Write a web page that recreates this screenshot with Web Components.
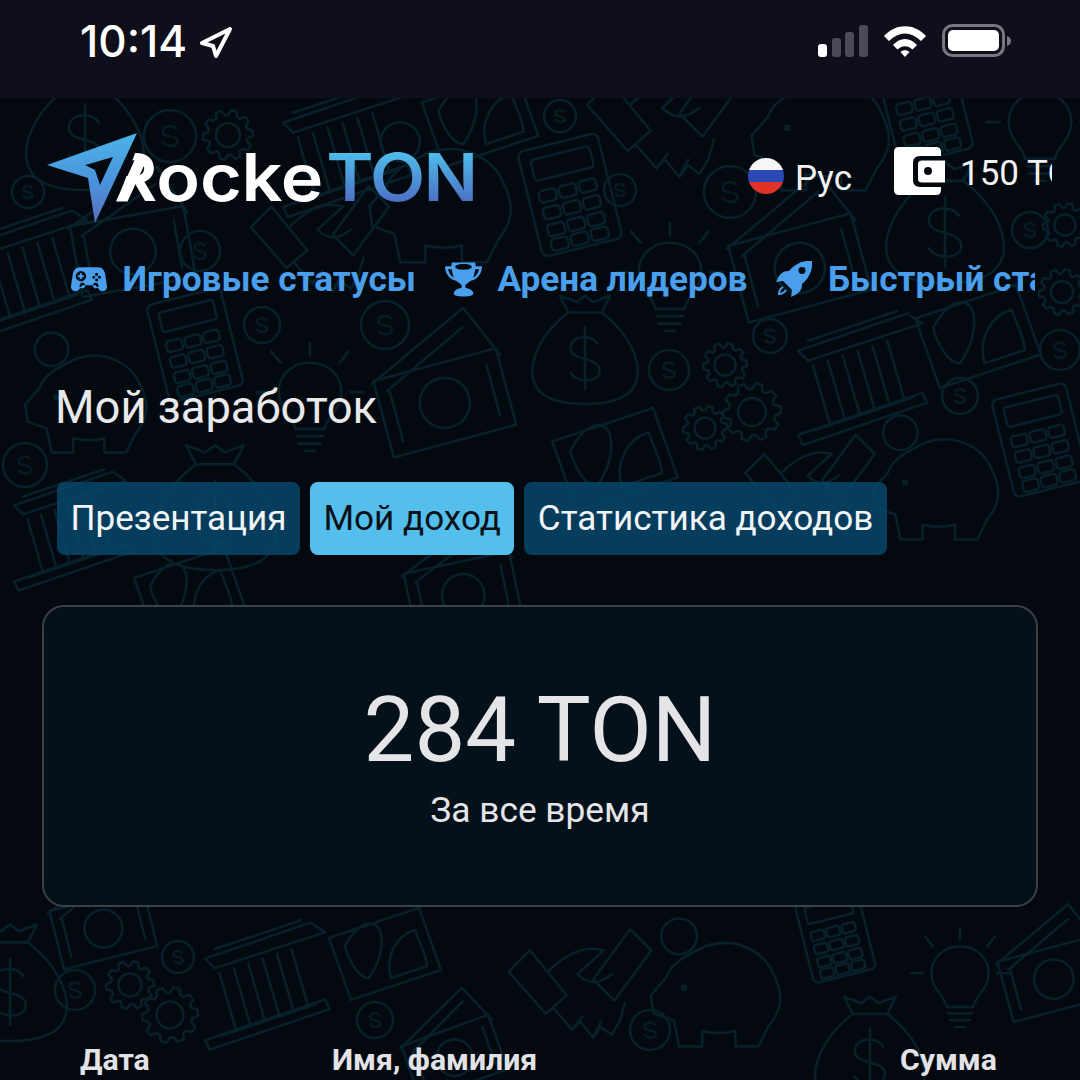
<!DOCTYPE html>
<html lang="ru">
<head>
<meta charset="utf-8">
<title>RockeTON</title>
<style>
    html, body { margin: 0; padding: 0; height: 1080px; overflow: hidden; background: #03090f; }
    body { font-family: Roboto, "Liberation Sans", sans-serif; }
</style>
</head>
<body>
<status-bar></status-bar>
<earnings-page>
    <site-header></site-header>
    <site-nav>
        <nav-item label="Игровые статусы" icon="pad"></nav-item>
        <nav-item label="Арена лидеров" icon="cup"></nav-item>
        <nav-item label="Быстрый старт" icon="rocket"></nav-item>
    </site-nav>
    <page-title>Мой заработок</page-title>
    <tab-row>
        <tab-button>Презентация</tab-button>
        <tab-button active>Мой доход</tab-button>
        <tab-button>Статистика доходов</tab-button>
    </tab-row>
    <total-card amount="284 TON" caption="За все время"></total-card>
    <table-head></table-head>
</earnings-page>

<script>
class StatusBar extends HTMLElement {
    constructor() {
        super();
        this.attachShadow({ mode: 'open' });
        this.shadowRoot.innerHTML = `
            <style>
                :host { display: flex; align-items: flex-start; height: 98px; box-sizing: border-box; padding: 19px 0 0 80px; background: #0f0f1b; color: #fff; }
                .time { font: 500 44px/44px Inter, "Liberation Sans", sans-serif; width: 117px; }
                .arrow { margin-top: 5px; }
                .right { margin-left: auto; margin-right: 68px; margin-top: 5px; display: flex; gap: 15px; align-items: center; }
            </style>
            <span class="time">10:14</span>
            <svg class="arrow" width="38" height="38" viewBox="0 0 38 38">
                <path d="M33 5 L5 19 L16 22 L19 32 Z" fill="none" stroke="#fff" stroke-width="4" stroke-linejoin="round"/>
            </svg>
            <div class="right">
                <svg width="50" height="34" viewBox="0 0 50 34">
                    <rect x="0" y="20" width="9" height="13" rx="3" fill="#fff"/>
                    <rect x="14" y="14" width="9" height="19" rx="3" fill="#4b4b57"/>
                    <rect x="27" y="8" width="9" height="25" rx="3" fill="#4b4b57"/>
                    <rect x="41" y="1" width="9" height="32" rx="3" fill="#4b4b57"/>
                </svg>
                <svg width="44" height="34" viewBox="0 0 44 34">
                    <path d="M1 12 C13 -1 31 -1 43 12 L38 17 C28 7 16 7 6 17 Z" fill="#fff"/>
                    <path d="M10 21 C17 13 27 13 34 21 L29.500 25.500 C25 21 19 21 14.500 25.500 Z" fill="#fff"/>
                    <path d="M17.500 28 C20 25.500 24 25.500 26.500 28 L22 33 Z" fill="#fff"/>
                </svg>
                <svg width="70" height="34" viewBox="0 0 70 34">
                    <rect x="1.500" y="1.500" width="60" height="30" rx="9" fill="none" stroke="#77777e" stroke-width="3"/>
                    <rect x="6" y="6" width="51" height="21" rx="5" fill="#fff"/>
                    <path d="M65 12 C68 13 69 15 69 17 C69 19 68 21 65 22 Z" fill="#77777e"/>
                </svg>
            </div>
        `;
    }
}

const coinPath = `<circle r="50"/><path d="M12 -14 C5 -22 -14 -20 -14 -8 C-14 5 14 -4 14 10 C14 21 -6 22 -13 13" opacity=".8"/>`;

function gearPath() {
    let d = '';
    const teeth = 10;
    for (let i = 0; i < teeth; i++) {
        const a = i / teeth * Math.PI * 2;
        const step = Math.PI / teeth;
        [[40, -step], [50, -step * 0.6], [50, step * 0.1], [40, step * 0.5]].forEach(([r, off], n) => {
            const x = (r * Math.cos(a + off)).toFixed(1);
            const y = (r * Math.sin(a + off)).toFixed(1);
            d += (i === 0 && n === 0 ? 'M' : 'L') + x + ' ' + y + ' ';
        });
    }
    return `<path d="${d}Z"/><circle r="24"/>`;
}

const doodles = {
    coin: coinPath,
    gear: gearPath(),
    bank: `<path d="M-50 -22 L38 -52 L50 -44 L-42 -14 Z M-42 -30 L30 -54"/><path d="M-38 -10 L-24 38 M-26 -14 L-12 34 M-14 -18 L0 30 M-2 -22 L12 26 M10 -26 L24 22 M22 -30 L36 18"/><path d="M-36 42 L42 16 M-46 54 L54 20 L50 12 L-50 46 Z"/>`,
    calc: `<rect x="-38" y="-50" width="76" height="100" rx="6"/><rect x="-28" y="-40" width="56" height="20" rx="3"/>` +
        [-10, 6, 22, 36].map(y => [-28, -9, 10].map(x => `<rect x="${x}" y="${y}" width="16" height="11" rx="3"/>`).join('')).join(''),
    bulb: `<path d="M-16 26 C-18 12 -34 6 -34 -14 C-34 -34 -18 -46 0 -46 C18 -46 34 -34 34 -14 C34 6 18 12 16 26 Z"/><path d="M-14 34 H14 M-12 42 H12 M-6 50 H6"/><path d="M0 -54 V-68 M-32 -46 L-42 -58 M32 -46 L42 -58 M-44 -14 H-58 M44 -14 H58"/>`,
    bag: `<path d="M-16 -38 C-40 -20 -54 6 -50 26 C-46 44 -26 50 0 50 C26 50 46 44 50 26 C54 6 40 -20 16 -38 L24 -54 L8 -48 L0 -54 L-8 -48 L-24 -54 Z"/><path d="M-16 -38 H16"/><path d="M12 -8 C6 -18 -14 -16 -14 -4 C-14 10 14 4 14 18 C14 30 -8 30 -14 20 M0 -24 V36"/>`,
    note: `<path d="M-50 -14 L32 -52 L50 -10 M-40 -6 L28 -38"/><rect x="-48" y="-16" width="96" height="60"/><circle cy="14" r="19"/><path d="M-38 -6 V34 M38 -6 V34"/>`,
    eye: `<path d="M-56 -12 L34 -42 L56 20 L-34 50 Z"/><path d="M-40 -4 C-28 -26 -16 -30 -8 -24 C0 -16 -2 8 -16 28 C-26 28 -36 12 -40 -4 Z"/><path d="M6 28 C0 8 10 -14 30 -20 C36 -4 42 8 42 16 Z"/>`,
    hands: `<path d="M-54 -14 L-38 -30 L-10 4 L-26 18 Z"/><path d="M54 -30 L38 -46 L10 -8 L26 8 Z"/><path d="M-24 -14 C-10 -28 4 -34 18 -30 L-2 -12 C6 -4 14 -4 24 -12"/><path d="M-20 14 L-6 30 L0 24 L10 36 L16 28 L24 34 L30 24 L34 10"/><path d="M-6 30 L2 20 M10 36 L16 24"/>`,
    pig: `<circle cx="-32" cy="-38" r="14"/><path d="M-54 8 L-42 -6 C-38 -18 -24 -24 -12 -30 C10 -38 34 -28 42 -8 C50 8 48 20 38 32 L30 48 L12 48 L12 36 C4 38 -6 38 -14 36 L-14 48 L-32 48 L-36 28 L-52 22 Z"/><circle cx="-28" cy="2" r="1.500"/>`
};

// x, y, radius in px, rotation in degrees: read off the reference
const scatter = [
    ['bag', 85, 132, 58, 0], ['coin', 170, 136, 26, 0], ['gear', 228, 135, 25, 0], ['bank', 345, 150, 62, 0], ['eye', 480, 115, 52, 0],
    ['coin', 28, 192, 16, 0], ['note', 130, 235, 60, -10], ['bank', 25, 275, 62, 0], ['coin', 200, 251, 20, 0], ['hands', 320, 245, 64, 0],
    ['pig', 445, 195, 70, 0], ['calc', 195, 345, 50, -14], ['coin', 262, 325, 18, 0], ['coin', 385, 325, 24, 0], ['pig', 90, 395, 60, 0],
    ['bulb', 310, 405, 46, 0], ['note', 440, 385, 66, -15], ['coin', 25, 465, 22, 0], ['bag', 215, 510, 60, 0], ['bank', 70, 530, 56, 0],
    ['calc', 570, 195, 54, -14], ['coin', 620, 190, 16, 0], ['coin', 560, 116, 16, 0], ['hands', 665, 125, 72, 0], ['pig', 825, 125, 68, 0], ['calc', 925, 108, 50, -14], ['bulb', 1040, 135, 46, 0],
    ['coin', 730, 192, 26, 0], ['note', 795, 250, 66, -15], ['bulb', 670, 285, 46, 0], ['bag', 945, 225, 58, 0], ['coin', 1030, 230, 18, 0], ['gear', 1065, 225, 22, 0], ['gear', 1062, 292, 23, 0],
    ['bag', 585, 352, 52, 0], ['coin', 669, 370, 20, 0], ['gear', 725, 365, 22, 0], ['gear', 752, 412, 29, 0], ['gear', 705, 428, 22, 0], ['coin', 770, 336, 17, 0],
    ['bank', 860, 378, 62, 0], ['eye', 978, 332, 56, 0], ['coin', 960, 396, 18, 0], ['coin', 1060, 350, 20, 0], ['calc', 1040, 440, 50, -14],
    ['eye', 615, 455, 56, 0], ['hands', 810, 490, 60, 0], ['pig', 940, 480, 62, 0],
    ['note', 460, 580, 56, -12], ['eye', 190, 590, 50, 0],
    ['bag', 10, 985, 56, 0], ['coin', 75, 990, 20, 0], ['gear', 130, 985, 24, 0], ['gear', 170, 1015, 28, 0], ['coin', 178, 957, 16, 0], ['bank', 265, 985, 60, 0],
    ['note', 100, 915, 50, -14], ['eye', 385, 950, 50, 0], ['coin', 375, 1020, 18, 0], ['note', 450, 1045, 48, -20],
    ['hands', 580, 990, 66, 0], ['pig', 720, 985, 64, 0], ['calc', 835, 935, 42, -14], ['bulb', 960, 985, 42, 0], ['note', 1050, 965, 52, -15],
    ['coin', 650, 1030, 20, 0], ['bag', 870, 1055, 54, 0]
];

class DoodleLayer extends HTMLElement {
    constructor() {
        super();
        this.attachShadow({ mode: 'open' });
        const items = scatter.map(([name, x, y, r, rot]) => {
            const k = r / 50;
            return `<g transform="translate(${x} ${y - 98}) rotate(${rot}) scale(${k})" stroke-width="${(2.600 / k).toFixed(2)}">${doodles[name]}</g>`;
        }).join('');
        this.shadowRoot.innerHTML = `
            <style>
                :host { position: absolute; inset: 0; display: block; overflow: hidden; }
                svg { display: block; filter: blur(.5px); }
                g { fill: none; stroke: #08202a; stroke-linejoin: round; stroke-linecap: round; }
            </style>
            <svg width="1080" height="982" viewBox="0 0 1080 982">${items}</svg>
        `;
    }
}

class EarningsPage extends HTMLElement {
    constructor() {
        super();
        this.attachShadow({ mode: 'open' });
        this.shadowRoot.innerHTML = `
            <style>
                :host { display: block; position: relative; height: 982px; overflow: hidden; background: #03090f; }
                .content { position: relative; display: flex; flex-direction: column; box-sizing: border-box; padding: 35px 42px 0; }
            </style>
            <doodle-layer></doodle-layer>
            <div class="content"><slot></slot></div>
        `;
    }
}

class SiteHeader extends HTMLElement {
    constructor() {
        super();
        this.attachShadow({ mode: 'open' });
        this.shadowRoot.innerHTML = `
            <style>
                :host { display: flex; align-items: flex-start; height: 90px; margin-right: -14px; color: #fff; }
                .logo { position: relative; width: 440px; height: 90px; flex: none; }
                .mark { position: absolute; left: 0; top: 0; }
                .word { position: absolute; left: 69px; top: 4px; font: 600 66px/80px Inter, "Liberation Sans", sans-serif; white-space: nowrap; letter-spacing: -.2px; transform: scaleX(1.09); transform-origin: 5px 0; }
                .ton { margin-left: 3px; letter-spacing: -1.500px; background: linear-gradient(180deg, #4fbcea 20%, #4c6fc4 82%); -webkit-background-clip: text; background-clip: text; color: transparent; }
                .right { flex: 1; min-width: 0; display: flex; align-items: center; height: 90px; padding-left: 266px; overflow: hidden; }
                .lang { font-size: 35px; margin-left: 11px; width: 99px; flex: none; color: #f2f2f2; }
                .bal { font-size: 35px; margin-left: 15px; margin-top: -10px; white-space: nowrap; color: #f2f2f2; }
                .right svg { flex: none; }
                .wallet { margin-top: -14px; }
                .flag { margin-top: -4px; }
            </style>
            <div class="logo">
                <span class="word">Rocke<span class="ton">TON</span></span>
                <svg class="mark" width="120" height="90" viewBox="42 133 120 90">
                    <defs>
                        <linearGradient id="lg" x1="0" y1="0" x2="0" y2="1">
                            <stop offset="0" stop-color="#4bb4e8"/>
                            <stop offset=".55" stop-color="#4a93dc"/>
                            <stop offset="1" stop-color="#5a6cc0"/>
                        </linearGradient>
                    </defs>
                    <path d="M105 148 L137 148 L116 204 L105 204 Z" fill="#03090f"/>
                    <path d="M116 201.500 L127.500 201.500 L148 157 L136 157 Z" fill="#fff"/>
                    <path d="M137 133 L95 223 L88 178 L47 165 Z M113 157 L85 165 L95 170 L100 185 Z" fill="url(#lg)" fill-rule="evenodd"/>
                </svg>
            </div>
            <div class="right">
                <svg class="flag" width="36" height="36" viewBox="0 0 36 36">
                    <defs><clipPath id="c"><circle cx="18" cy="18" r="18"/></clipPath></defs>
                    <g clip-path="url(#c)">
                        <rect width="36" height="12" fill="#f6f6f6"/>
                        <rect y="12" width="36" height="12" fill="#2a49b5"/>
                        <rect y="24" width="36" height="12" fill="#df3327"/>
                    </g>
                </svg>
                <span class="lang">Рус</span>
                <svg class="wallet" width="51" height="48" viewBox="0 0 51 48">
                    <path d="M5 0 H42 Q47 0 47 5 V43 Q47 48 42 48 H5 Q0 48 0 43 V5 Q0 0 5 0 Z" fill="#fff"/>
                    <path d="M51 9 H26 Q19 9 19 16 V33 Q19 40 26 40 H51 Z" fill="#03090f"/>
                    <path d="M51 13.500 H28 Q24 13.500 24 17 V32 Q24 35.500 28 35.500 H51 Z" fill="#fff"/>
                    <circle cx="34" cy="24" r="4" fill="#03090f"/>
                </svg>
                <span class="bal">150 TON</span>
            </div>
        `;
    }
}

const navIcons = {
    pad: `<svg width="36" height="27" viewBox="0 0 38 28"><path fill-rule="evenodd" fill="#4a9fec" d="M9 1 H29 C33 1 35 4 36 8 L38 21 C38.500 26 33 28 30 25 L26 20 H12 L8 25 C5 28 -0.500 26 0 21 L2 8 C3 4 5 1 9 1 Z M10.500 5 A5.500 5.500 0 1 0 10.501 16 A5.500 5.500 0 1 0 10.500 5 Z M27 7 a1.600 1.600 0 1 0 .01 0 Z M27 13 a1.600 1.600 0 1 0 .01 0 Z M24 10 a1.600 1.600 0 1 0 .01 0 Z M30 10 a1.600 1.600 0 1 0 .01 0 Z M12 17.500 a3 3 0 1 0 .01 0 Z M26 17.500 a3 3 0 1 0 .01 0 Z"/><path d="M10.500 7.500 V13.500 M7.500 10.500 H13.500" stroke="#4a9fec" stroke-width="2"/></svg>`,
    cup: `<svg width="37" height="36" viewBox="0 0 38 36"><path fill-rule="evenodd" fill="#4a9fec" d="M7 1 H31 L31.500 5 H38 C38 13 33 19 26 20 C24 22 22 23 21 24 V27 C26 28 29 30 29 33 C29 35 26 36 19 36 C12 36 9 35 9 33 C9 30 12 28 17 27 V24 C16 23 14 22 12 20 C5 19 0 13 0 5 H6.500 Z M3 8 C4 12 6 15 9 16.500 C8 14 7.500 11 7 8 Z M35 8 H31 C30.500 11 30 14 29 16.500 C32 15 34 12 35 8 Z M19 2.500 C13 2.500 10.500 4 10.500 5.500 C10.500 7 13 8.500 19 8.500 C25 8.500 27.500 7 27.500 5.500 C27.500 4 25 2.500 19 2.500 Z"/></svg>`,
    rocket: `<svg width="36" height="36" viewBox="0 0 36 36"><path fill-rule="evenodd" fill="#4a9fec" d="M36 0 C37 9 33 17 26 23 C26 27 25 30 21 33 L15 36 L16 29 L7 20 L0 21 L3 15 C6 11 9 10 13 10 C19 3 27 -1 36 0 Z M26 6 A3.500 3.500 0 1 0 26.010 13 A3.500 3.500 0 1 0 26 6 Z"/><path d="M7 26 C4 28 3 30 3 33 C6 33 8 32 10 29" fill="none" stroke="#4a9fec" stroke-width="2"/></svg>`
};

class NavItem extends HTMLElement {
    constructor() {
        super();
        this.attachShadow({ mode: 'open' });
    }
    connectedCallback() {
        this.shadowRoot.innerHTML = `
            <style>
                :host { display: flex; align-items: center; gap: 15.500px; flex: none; white-space: nowrap; color: #4a9fec; font: 700 35.200px/46px Roboto, "Liberation Sans", sans-serif; }
                svg { display: block; }
            </style>
            ${navIcons[this.getAttribute('icon')]}
            <span>${this.getAttribute('label')}</span>
        `;
    }
}

class SiteNav extends HTMLElement {
    constructor() {
        super();
        this.attachShadow({ mode: 'open' });
        this.shadowRoot.innerHTML = `
            <style>
                :host { display: flex; gap: 29px; height: 46px; margin: 33px 3px 0 29px; overflow: hidden; }
            </style>
            <slot></slot>
        `;
    }
}

class PageTitle extends HTMLElement {
    constructor() {
        super();
        this.attachShadow({ mode: 'open' });
        this.shadowRoot.innerHTML = `
            <style>
                :host { display: block; margin: 73px 0 0 13px; color: #e9e9ec; font: 400 45.300px/66px Roboto, "Liberation Sans", sans-serif; }
            </style>
            <slot></slot>
        `;
    }
}

class TabRow extends HTMLElement {
    constructor() {
        super();
        this.attachShadow({ mode: 'open' });
        this.shadowRoot.innerHTML = `
            <style>
                :host { display: flex; gap: 10px; margin: 41px 0 0 15px; }
            </style>
            <slot></slot>
        `;
    }
}

class TabButton extends HTMLElement {
    constructor() {
        super();
        this.attachShadow({ mode: 'open' });
        this.shadowRoot.innerHTML = `
            <style>
                :host { display: block; height: 73px; box-sizing: border-box; padding: 0 13.500px; border-radius: 8px; background: rgba(7, 68, 104, .88); color: #f1f5f8; font: 400 35.100px/73px Roboto, "Liberation Sans", sans-serif; white-space: nowrap; }
                :host([active]) { background: #54bfec; color: #0a1016; }
            </style>
            <slot></slot>
        `;
    }
}

class TotalCard extends HTMLElement {
    constructor() {
        super();
        this.attachShadow({ mode: 'open' });
    }
    connectedCallback() {
        this.shadowRoot.innerHTML = `
            <style>
                :host { display: flex; flex-direction: column; align-items: center; box-sizing: border-box; height: 302px; margin-top: 50px; padding-top: 69px; border: 2px solid #3b4145; border-radius: 22px; background: #04111a; }
                .amount { color: #e5e5e7; font: 400 90.500px/108px Roboto, "Liberation Sans", sans-serif; }
                .caption { color: #e5e5e7; font: 400 35.300px/44px Roboto, "Liberation Sans", sans-serif; margin-top: 4px; }
            </style>
            <div class="amount">${this.getAttribute('amount')}</div>
            <div class="caption">${this.getAttribute('caption')}</div>
        `;
    }
}

class TableHead extends HTMLElement {
    constructor() {
        super();
        this.attachShadow({ mode: 'open' });
        this.shadowRoot.innerHTML = `
            <style>
                :host { display: grid; grid-template-columns: 252px 568px auto; margin: 135px 0 0 38px; color: #e3e3e7; font: 700 30.200px/36px Roboto, "Liberation Sans", sans-serif; }
            </style>
            <span>Дата</span><span>Имя, фамилия</span><span>Сумма</span>
        `;
    }
}

customElements.define('status-bar', StatusBar);
customElements.define('doodle-layer', DoodleLayer);
customElements.define('earnings-page', EarningsPage);
customElements.define('site-header', SiteHeader);
customElements.define('nav-item', NavItem);
customElements.define('site-nav', SiteNav);
customElements.define('page-title', PageTitle);
customElements.define('tab-row', TabRow);
customElements.define('tab-button', TabButton);
customElements.define('total-card', TotalCard);
customElements.define('table-head', TableHead);
</script>
</body>
</html>
